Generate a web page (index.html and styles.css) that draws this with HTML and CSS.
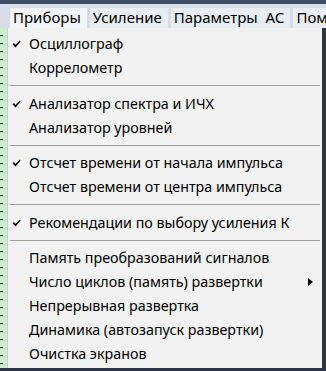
FILE: index.html
```html
<!DOCTYPE html>
<html lang="ru">
<head>
    <meta charset="UTF-8">
    <title>Приборы</title>
    <link rel="stylesheet" href="styles.css">
</head>
<body>
    <div class="topline"></div>
    <div class="menubar">
        <span class="menubar-item active">Приборы</span>
        <span class="menubar-item">Усиление</span>
        <span class="menubar-item">Параметры <span class="gap">АС</span></span>
        <span class="menubar-item">Помощь</span>
    </div>
    <div class="workspace">
        <div class="chart-left"></div>
        <div class="dropdown">
            <div class="item"><svg class="mark" viewBox="0 0 9 8"><path d="M0.5 4.2 L2 3 L3.5 5 L7.8 0.5 L8.6 1.4 L3.6 7.5 Z"/></svg>Осциллограф</div>
            <div class="item">Коррелометр</div>
            <div class="sep"></div>
            <div class="item"><svg class="mark" viewBox="0 0 9 8"><path d="M0.5 4.2 L2 3 L3.5 5 L7.8 0.5 L8.6 1.4 L3.6 7.5 Z"/></svg>Анализатор спектра и ИЧХ</div>
            <div class="item">Анализатор уровней</div>
            <div class="sep"></div>
            <div class="item"><svg class="mark" viewBox="0 0 9 8"><path d="M0.5 4.2 L2 3 L3.5 5 L7.8 0.5 L8.6 1.4 L3.6 7.5 Z"/></svg>Отсчет времени от начала импульса</div>
            <div class="item">Отсчет времени от центра импульса</div>
            <div class="sep"></div>
            <div class="item"><svg class="mark" viewBox="0 0 9 8"><path d="M0.5 4.2 L2 3 L3.5 5 L7.8 0.5 L8.6 1.4 L3.6 7.5 Z"/></svg>Рекомендации по выбору усиления К</div>
            <div class="sep"></div>
            <div class="item">Память преобразований сигналов</div>
            <div class="item">Число циклов (память) развертки<span class="arrow"></span></div>
            <div class="item">Непрерывная развертка</div>
            <div class="item">Динамика (автозапуск развертки)</div>
            <div class="item">Очистка экранов</div>
        </div>
        <div class="chart-right"></div>
    </div>
</body>
</html>
```
FILE: styles.css
```css
body {
    margin: 0;
    width: 326px;
    height: 371px;
    overflow: hidden;
    font-family: 'Noto Sans', sans-serif;
    font-size: 14.3px;
    color: #000;
    background-color: #2c3444;
}

.topline {
    height: 4px;
    background-color: #434f62;
}

.menubar {
    height: 24px;
    background-color: #d6dde6;
    display: flex;
    align-items: flex-end;
    padding-left: 10px;
    gap: 3px;
    white-space: nowrap;
    overflow: hidden;
    font-size: 15px;
}

.menubar-item {
    flex-shrink: 0;
    height: 20px;
    line-height: 19px;
    padding: 0 6px 0 3px;
    background-color: #e9edf2;
}

.menubar-item.active {
    background-color: #f3f5f8;
}

.gap {
    margin-left: 4px;
}

.workspace {
    display: flex;
    height: 340px;
}

.chart-left {
    width: 7px;
    background-color: #c8f0c8;
    background-image: repeating-linear-gradient(to bottom, transparent 0, transparent 7px, #3a3a3a 7px, #3a3a3a 8px);
    background-size: 3px 100%;
    background-repeat: no-repeat;
}

.dropdown {
    width: 314px;
    background-color: #f2f2f2;
    border-left: 1px solid #cfcfcf;
    padding-top: 4px;
}

.chart-right {
    flex: 1;
    background-color: #34343c;
}

.item {
    position: relative;
    height: 24px;
    line-height: 24px;
    padding-left: 21px;
    white-space: nowrap;
}

.mark {
    position: absolute;
    left: 4px;
    top: 8px;
    width: 9px;
    height: 8px;
    fill: #000;
}

.sep {
    height: 1px;
    margin: 5px 2px 5.5px 2px;
    background-color: #a0a0a0;
}

.arrow {
    position: absolute;
    right: 9px;
    top: 8px;
    border-left: 5px solid #000;
    border-top: 4px solid transparent;
    border-bottom: 4px solid transparent;
}
```
